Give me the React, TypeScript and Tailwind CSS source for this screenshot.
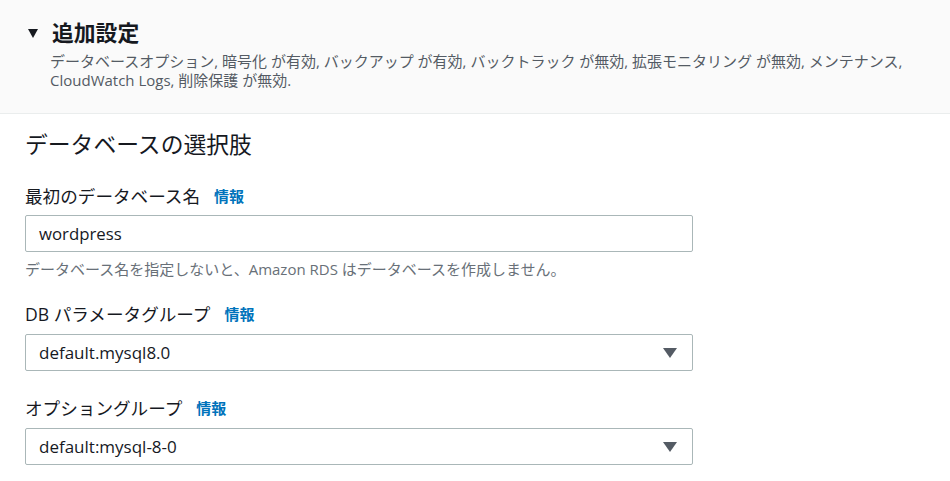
import { ReactNode } from 'react';

const font = { fontFamily: '"Open Sans", "Noto Sans CJK JP", sans-serif' };

function Label({ children }: { children: ReactNode }) {
  return (
    <div className="flex items-center gap-[14px] text-[17.6px] leading-[22px] text-[#16191f]">
      <span>{children}</span>
      <a href="#" className="text-[15px] font-bold text-[#0073bb]">
        情報
      </a>
    </div>
  );
}

function Select({ value }: { value: string }) {
  return (
    <div className="mt-[9px] flex h-[37px] w-[668px] items-center justify-between rounded-[2px] border border-[#aab7b8] bg-white pl-[13px] pr-[15px] text-[17px] text-[#16191f]">
      <span>{value}</span>
      <svg width="14" height="10" viewBox="0 0 14 10">
        <path d="M0 0 H14 L7 10 Z" fill="#545b64" />
      </svg>
    </div>
  );
}

export default function App() {
  return (
    <div className="min-h-screen w-[950px] bg-white" style={font}>
      {/* 追加設定 header */}
      <div className="border-b border-[#eaeded] bg-[#fafafa] pb-[23px] pl-[28px] pr-[20px] pt-[20px]">
        <div className="flex items-center gap-[14px]">
          <svg width="10" height="9" viewBox="0 0 10 9">
            <path d="M0 0 H10 L5 9 Z" fill="#16191f" />
          </svg>
          <h2 className="text-[21.8px] font-bold leading-[26px] text-[#16191f]">追加設定</h2>
        </div>
        <p className="mt-[6px] whitespace-nowrap pl-[22px] text-[15px] leading-[19px] text-[#545b64]">
          データベースオプション, 暗号化 が有効, バックアップ が有効, バックトラック が無効, 拡張モニタリング が無効, メンテナンス,
          <br />
          CloudWatch Logs, 削除保護 が無効.
        </p>
      </div>

      <div className="flex flex-col px-[25px] pt-[16px]">
        <h3 className="text-[22.8px] font-normal leading-[30px] text-[#16191f]">データベースの選択肢</h3>

        <div className="mt-[25px]">
          <Label>最初のデータベース名</Label>
        </div>
        <div className="mt-[8px] flex h-[37px] w-[668px] items-center rounded-[2px] border border-[#aab7b8] bg-white pl-[13px] text-[16.8px] text-[#16191f]">
          wordpress
        </div>
        <p className="mt-[7px] text-[15px] leading-[20px] text-[#687078]">
          データベース名を指定しないと、Amazon RDS はデータベースを作成しません。
        </p>

        <div className="mt-[24px]">
          <Label>DB パラメータグループ</Label>
        </div>
        <Select value="default.mysql8.0" />

        <div className="mt-[26px]">
          <Label>オプショングループ</Label>
        </div>
        <Select value="default:mysql-8-0" />
      </div>
    </div>
  );
}
